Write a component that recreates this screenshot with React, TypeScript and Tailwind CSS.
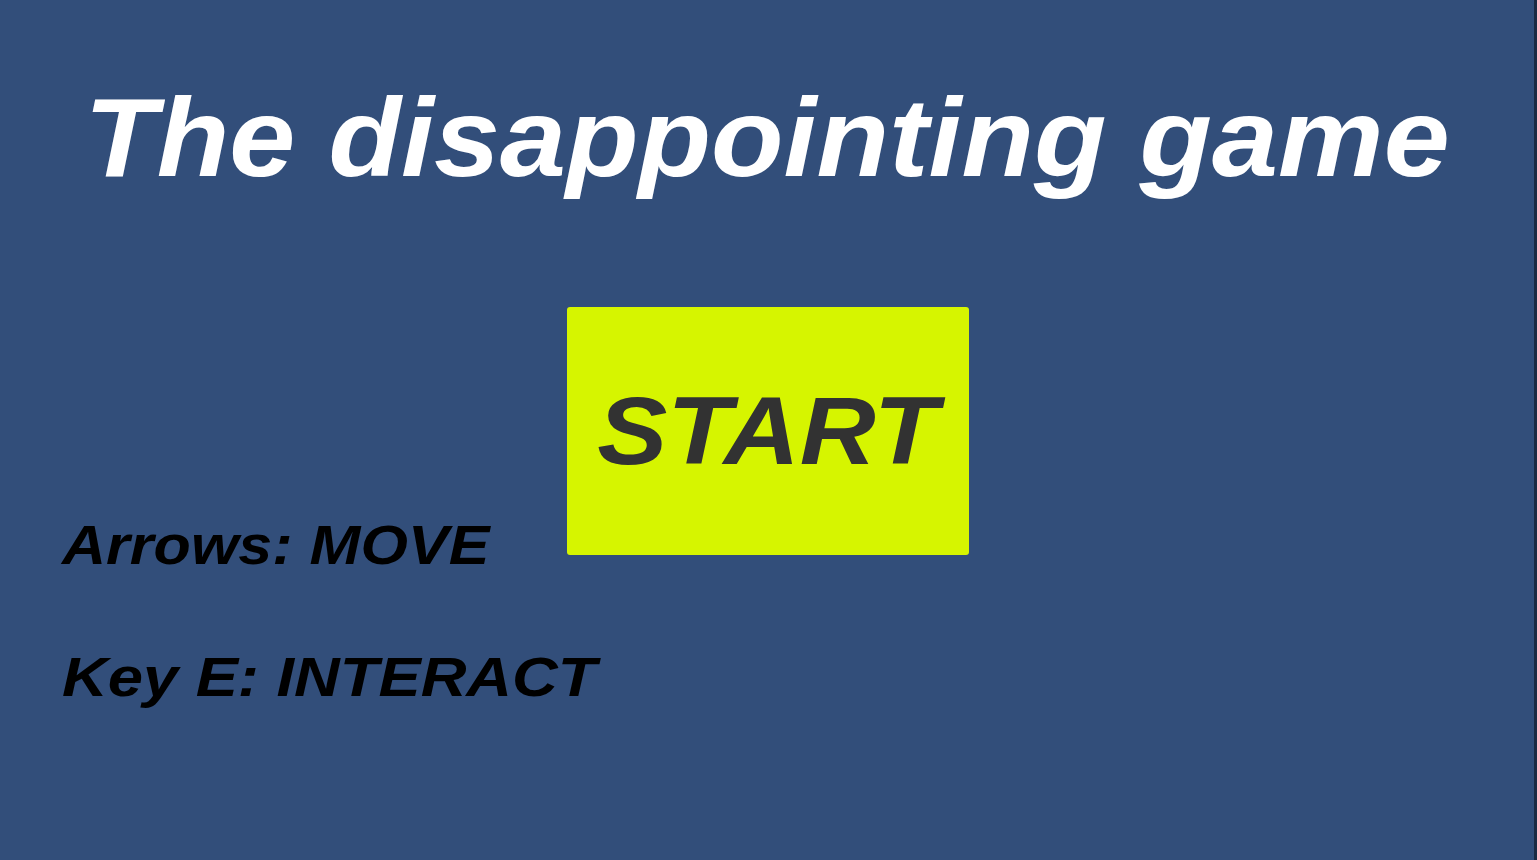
export default function App() {
  return (
    <div
      className="h-[860px] w-full overflow-hidden bg-[#324e7a] border-r-[3px] border-[#1b2a42] flex flex-col"
      style={{ fontFamily: '"Liberation Sans", Arial, sans-serif' }}
    >
      <h1 className="pt-[74px] text-center text-[112px] leading-[128px] font-bold italic text-white scale-x-[1.06]">
        The disappointing game
      </h1>

      <div className="mt-[105px] grid grid-cols-[567px_402px_1fr]">
        <div className="pt-[210px] pl-[62px] flex flex-col gap-[76px] text-[56px] leading-none font-bold italic text-black whitespace-nowrap">
          <span className="origin-left scale-x-[1.09]">Arrows: MOVE</span>
          <span className="origin-left scale-x-[1.13]">Key E: INTERACT</span>
        </div>

        <button className="h-[248px] rounded-[3px] bg-[#d6f500] flex items-center justify-center">
          <span className="text-[96px] leading-none font-bold italic text-[#323232] scale-x-[1.095]">
            START
          </span>
        </button>

        <div />
      </div>
    </div>
  );
}
